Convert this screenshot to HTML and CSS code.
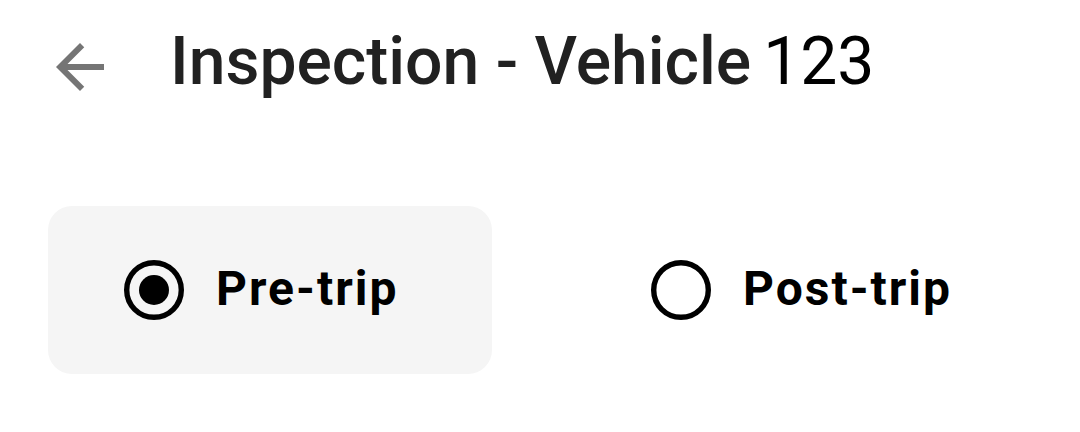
FILE: index.html
```html
<!DOCTYPE html>
<html lang="en">
<head>
    <meta charset="UTF-8">
    <meta name="viewport" content="width=device-width, initial-scale=1.0">
    <title>Inspection - Vehicle 123</title>
    <link rel="stylesheet" href="styles.css">
</head>
<body>
    <header class="app-bar">
        <button class="app-bar__back" aria-label="Back">
            <svg viewBox="0 0 24 24" width="72" height="72">
                <path d="M20 11H7.83l5.59-5.59L12 4l-8 8 8 8 1.41-1.41L7.83 13H20v-2z" fill="#757575"/>
            </svg>
        </button>
        <h1 class="app-bar__title">Inspection - Vehicle<span class="app-bar__id">123</span></h1>
    </header>

    <div class="trip-type" role="radiogroup">
        <label class="trip-option trip-option--selected">
            <svg class="trip-option__radio" viewBox="0 0 24 24" width="72" height="72">
                <circle cx="12" cy="12" r="9.1" fill="none" stroke="#000" stroke-width="1.8"/>
                <circle cx="12" cy="12" r="5" fill="#000"/>
            </svg>
            <span class="trip-option__label">Pre-trip</span>
        </label>
        <label class="trip-option">
            <svg class="trip-option__radio" viewBox="0 0 24 24" width="72" height="72">
                <circle cx="12" cy="12" r="9.1" fill="none" stroke="#000" stroke-width="1.8"/>
            </svg>
            <span class="trip-option__label">Post-trip</span>
        </label>
    </div>
</body>
</html>
```

FILE: styles.css
```css
body {
    margin: 0;
    background: #fff;
    font-family: Roboto, "Noto Sans", sans-serif;
    width: 1080px;
    height: 432px;
    overflow: hidden;
}

.app-bar {
    display: flex;
    align-items: center;
    height: 72px;
    padding: 31px 0 0 44px;
}

.app-bar__back {
    display: flex;
    padding: 0;
    border: 0;
    background: none;
    width: 72px;
    height: 72px;
}

.app-bar__title {
    margin: 0 0 0 54px;
    font-size: 66px;
    font-weight: 500;
    color: #212121;
    position: relative;
    top: -6px;
    white-space: nowrap;
}

.app-bar__id {
    margin-left: 12px;
    font-weight: 400;
    color: #000;
}

.trip-type {
    display: flex;
    gap: 83px;
    margin: 103px 0 0 48px;
}

.trip-option {
    display: flex;
    align-items: center;
    gap: 26px;
    height: 168px;
    padding-left: 70px;
    border-radius: 24px;
    box-sizing: border-box;
}

.trip-option--selected {
    width: 444px;
    background: #f5f5f5;
}

.trip-option__label {
    font-size: 48px;
    font-weight: 700;
    letter-spacing: 2px;
    color: #000;
    position: relative;
    top: -2px;
}
```
